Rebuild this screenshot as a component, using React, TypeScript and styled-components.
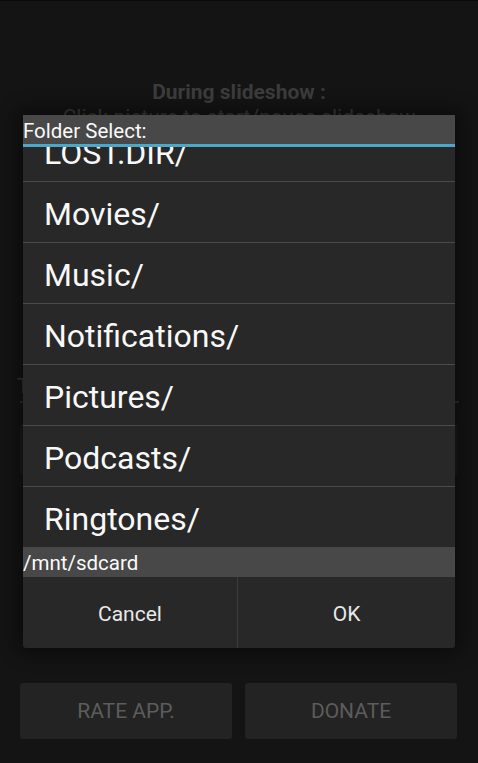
import React from "react";
import styled, { createGlobalStyle } from "styled-components";

const Global = createGlobalStyle`
  html, body { margin: 0; padding: 0; background: #141414; }
  body { font-family: Roboto, "Noto Sans", sans-serif; }
  * { box-sizing: border-box; }
`;

const Screen = styled.div`
  position: relative;
  width: 478px;
  height: 763px;
  overflow: hidden;
  background: #141414;
  border-top: 1px solid #0a0a0a;
  display: flex;
  flex-direction: column;
  padding: 0 20px 0 20px;
`;

const Hints = styled.div`
  margin-top: 79px;
  display: flex;
  flex-direction: column;
  align-items: center;
  color: #3c3c3c;
  font-size: 21px;
  line-height: 25px;
`;

const HintTitle = styled.div`
  font-weight: 700;
`;

const Label = styled.div`
  margin-top: 244px;
  margin-left: -3px;
  color: #3a3a3a;
  font-size: 20px;
  line-height: 24px;
`;

const Divider = styled.div`
  margin-top: 3px;
  height: 2px;
  margin-right: -1px;
  background: #27322f;
`;

const Field = styled.div`
  margin-top: 21px;
  height: 51px;
  background: #1b1b1b;
  border-radius: 2px;
`;

const ActionRow = styled.div`
  margin-top: auto;
  margin-bottom: 24px;
  display: grid;
  grid-template-columns: 212px 212px;
  gap: 13px;
`;

const DimButton = styled.div`
  height: 56px;
  background: #232323;
  border-radius: 3px;
  display: flex;
  align-items: center;
  justify-content: center;
  color: #5c5c5c;
  font-size: 21px;
`;

const Dialog = styled.div`
  position: absolute;
  left: 23px;
  top: 114px;
  width: 432px;
  display: flex;
  flex-direction: column;
  box-shadow: 0 0 18px 6px rgba(0, 0, 0, 0.45);
  border-radius: 0 0 3px 3px;
  overflow: hidden;
`;

const TitleBar = styled.div`
  height: 32px;
  background: #484848;
  color: #fafafa;
  font-size: 20.5px;
  line-height: 29px;
  padding-top: 2px;
  border-bottom: 3px solid #4aa8cb;
`;

const ListViewport = styled.div`
  height: 400px;
  overflow: hidden;
  background: #282828;
`;

const List = styled.div`
  margin-top: -26px;
  display: flex;
  flex-direction: column;
`;

const Row = styled.div`
  height: 61px;
  flex: none;
  border-bottom: 1px solid #4a4a4a;
  display: flex;
  align-items: center;
  padding-left: 21px;
  padding-top: 3px;
  color: #f8f8f8;
  font-size: 32px;
`;

const PathBar = styled.div`
  height: 30px;
  background: #484848;
  color: #fafafa;
  font-size: 20.5px;
  line-height: 30px;
  padding-top: 1px;
`;

const ButtonBar = styled.div`
  height: 71px;
  background: #282828;
  display: grid;
  grid-template-columns: 215px 1fr;
`;

const DialogButton = styled.div<{ $divider?: boolean }>`
  display: flex;
  align-items: center;
  justify-content: center;
  padding-top: 2px;
  color: #e8e8e8;
  font-size: 21px;
  border-right: ${(p) => (p.$divider ? "1px solid #3c3c3c" : "none")};
`;

const folders = [
  "LOST.DIR/",
  "Movies/",
  "Music/",
  "Notifications/",
  "Pictures/",
  "Podcasts/",
  "Ringtones/",
];

export default function App() {
  return (
    <>
      <Global />
      <Screen>
        <Hints>
          <HintTitle>During slideshow :</HintTitle>
          <div>Click picture to start/pause slideshow</div>
        </Hints>
        <Label>Transition effect :</Label>
        <Divider />
        <Field />
        <ActionRow>
          <DimButton>RATE APP.</DimButton>
          <DimButton>DONATE</DimButton>
        </ActionRow>
        <Dialog>
          <TitleBar>Folder Select:</TitleBar>
          <ListViewport>
            <List>
              {folders.map((f) => (
                <Row key={f}>{f}</Row>
              ))}
            </List>
          </ListViewport>
          <PathBar>/mnt/sdcard</PathBar>
          <ButtonBar>
            <DialogButton $divider>Cancel</DialogButton>
            <DialogButton>OK</DialogButton>
          </ButtonBar>
        </Dialog>
      </Screen>
    </>
  );
}
